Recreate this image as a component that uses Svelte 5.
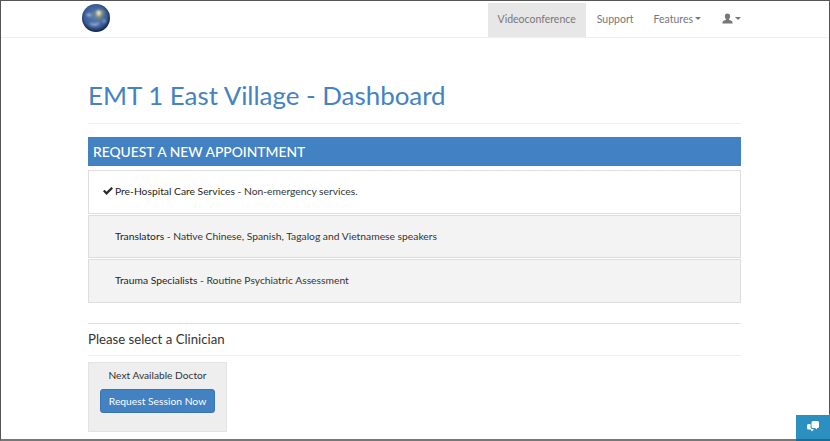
<script>
	const services = [
		{ name: 'Pre-Hospital Care Services', detail: 'Non-emergency services.', selected: true },
		{ name: 'Translators', detail: 'Native Chinese, Spanish, Tagalog and Vietnamese speakers', selected: false },
		{ name: 'Trauma Specialists', detail: 'Routine Psychiatric Assessment', selected: false }
	];
</script>

<div class="page">
	<nav class="navbar">
		<svg class="globe" viewBox="0 0 28 28" width="28" height="28">
			<defs>
				<radialGradient id="sea" cx="0.48" cy="0.44" r="0.56">
					<stop offset="0" stop-color="#5e80b8" />
					<stop offset="0.72" stop-color="#3a5c98" />
					<stop offset="1" stop-color="#101f42" />
				</radialGradient>
				<filter id="soft"><feGaussianBlur stdDeviation="0.9" /></filter>
				<clipPath id="disc"><circle cx="14" cy="14" r="13.500" /></clipPath>
			</defs>
			<circle cx="14" cy="14" r="14" fill="url(#sea)" />
			<g clip-path="url(#disc)">
				<g filter="url(#soft)">
					<path d="M12 8c3-3 8-3 10-1 1 2 0 5-2 6-1 2-2 3-4 3-1-2-2-3-3-4-1-1-2-3-1-4z" fill="#7d8870" />
					<path d="M15 7c2-1 3 0 4 1 0 2-1 4-3 4-1-1-2-3-1-5z" fill="#e2e2d0" />
					<path d="M4 10c2-1 5-1 6 1-1 2-3 2-5 1z" fill="#b5c4df" opacity="0.7" />
					<path d="M7 19c3 0 7 1 11-1-1 3-3 4-6 4-2 0-4-1-5-3z" fill="#c2cfe6" opacity="0.65" />
					<path d="M21 15c2 0 3 1 3 3-1 1-3 1-4 0z" fill="#aebbd4" opacity="0.6" />
				</g>
			</g>
		</svg>
		<ul class="nav-links">
			<li class="active">Videoconference</li>
			<li class="support">Support</li>
			<li>Features <span class="caret"></span></li>
			<li class="user">
				<svg viewBox="0 0 12 12" width="11" height="11">
					<path d="M6 .5c1.900 0 2.900 1.400 2.900 3 0 1.200-.5 2.300-1.200 3v1.100c1.500.5 3.800 1 3.800 2.400v1.500H.5V10c0-1.400 2.300-1.900 3.800-2.400V6.500c-.7-.7-1.200-1.800-1.200-3 0-1.600 1-3 2.900-3z" fill="#777" />
				</svg>
				<span class="caret"></span>
			</li>
		</ul>
	</nav>

	<main class="container">
		<h1>EMT 1 East Village - Dashboard</h1>
		<h2 class="band">REQUEST A NEW APPOINTMENT</h2>

		<div class="services">
			{#each services as service}
				<div class="service" class:selected={service.selected}>
					<span class="tick">
						{#if service.selected}
							<svg viewBox="0 0 10 8" width="10" height="8">
								<path d="M0 4.300 1.500 2.800 3.500 4.800 8.400 0 10 1.500 3.500 8z" fill="#2a2a2a" />
							</svg>
						{/if}
					</span>
					<span><b>{service.name}</b> - {service.detail}</span>
				</div>
			{/each}
		</div>

		<h3>Please select a Clinician</h3>

		<div class="doctor">
			<p>Next Available Doctor</p>
			<button>Request Session Now</button>
		</div>
	</main>

	<button class="chat" aria-label="Chat">
		<svg viewBox="0 0 12 11" width="12" height="11">
			<path d="M6 0h4.500A1.500 1.500 0 0 1 12 1.500v4A1.500 1.500 0 0 1 10.500 7H10v1.500L8 7H6A1.500 1.500 0 0 1 4.500 5.500v-4A1.500 1.500 0 0 1 6 0z" fill="#fff" />
			<path d="M3.500 3v3A2 2 0 0 0 5.500 8H7L5 10.500 3.500 8.500H1.500A1.500 1.500 0 0 1 0 7V4.500A1.500 1.500 0 0 1 1.500 3z" fill="#fff" />
		</svg>
	</button>
</div>

<style>
	:global(body) {
		margin: 0;
	}
	.page {
		position: relative;
		box-sizing: border-box;
		height: 441px;
		background: #fff;
		border: 1px solid #555;
		border-bottom: 2px solid #777;
		font-family: Lato, "Liberation Sans", sans-serif;
		color: #333;
	}
	.navbar {
		display: flex;
		justify-content: space-between;
		height: 36px;
		padding: 0 78px 0 81px;
		border-bottom: 1px solid #eee;
	}
	.globe {
		margin-top: 3px;
	}
	.nav-links {
		display: flex;
		margin: 2px 0 0;
		padding: 0;
		list-style: none;
		font-size: 10.5px;
		color: #777;

		& li {
			display: flex;
			align-items: center;
			gap: 1px;
			padding: 0 10px 3px;
		}
		& .active {
			background: #e7e7e7;
		}
		& .support {
			padding-left: 11px;
		}
		& .user {
			padding-left: 11px;
		}
	}
	.caret {
		width: 0;
		height: 0;
		margin-left: 1px;
		border-top: 3px solid #777;
		border-left: 3px solid transparent;
		border-right: 3px solid transparent;
	}
	.container {
		padding: 0 88px 0 87px;
	}
	h1 {
		margin: 42px 0 0;
		padding-bottom: 12px;
		border-bottom: 1px solid #eee;
		font-size: 25.9px;
		font-weight: 400;
		line-height: 31px;
		color: #4482c3;
	}
	.band {
		margin: 13px 0 0;
		padding: 0 5px;
		background: #4281c2;
		color: #fff;
		font-size: 13.85px;
		font-weight: 500;
		line-height: 29px;
	}
	.services {
		display: flex;
		flex-direction: column;
		gap: 1px;
		margin-top: 4px;
	}
	.service {
		display: flex;
		align-items: center;
		height: 43.500px;
		padding-bottom: 1px;
		box-sizing: border-box;
		border: 1px solid #ddd;
		background: #f3f3f3;
		font-size: 10.3px;
		color: #333;

		& b {
			font-weight: 400;
			color: #222;
		}
		&.selected {
			background: #fff;
		}
	}
	.tick {
		display: flex;
		width: 26px;
		padding-left: 14px;
		box-sizing: border-box;
	}
	h3 {
		margin: 20.500px 0 0;
		padding: 6px 0;
		border-top: 1px solid #ddd;
		border-bottom: 1px solid #eee;
		font-size: 13.2px;
		font-weight: 400;
		line-height: 19px;
	}
	.doctor {
		box-sizing: border-box;
		width: 139px;
		height: 70px;
		margin-top: 6px;
		padding-top: 6px;
		border: 1px solid #e3e3e3;
		background: #eee;
		text-align: center;

		& p {
			margin: 0 0 8px;
			font-size: 10.2px;
			line-height: 12px;
		}
		& button {
			width: 115px;
			height: 24px;
			padding: 0;
			border: 1px solid #3a74b0;
			border-radius: 3px;
			background: #4281c2;
			color: #fff;
			font: 10.3px Lato, "Liberation Sans", sans-serif;
		}
	}
	.chat {
		position: absolute;
		right: -1px;
		bottom: -2px;
		display: flex;
		align-items: center;
		justify-content: center;
		box-sizing: border-box;
		width: 34px;
		height: 26px;
		padding: 0 0 1px;
		border: 0;
		border-bottom: 2px solid #1d6b92;
		background: #2b8fc0;
	}
</style>
